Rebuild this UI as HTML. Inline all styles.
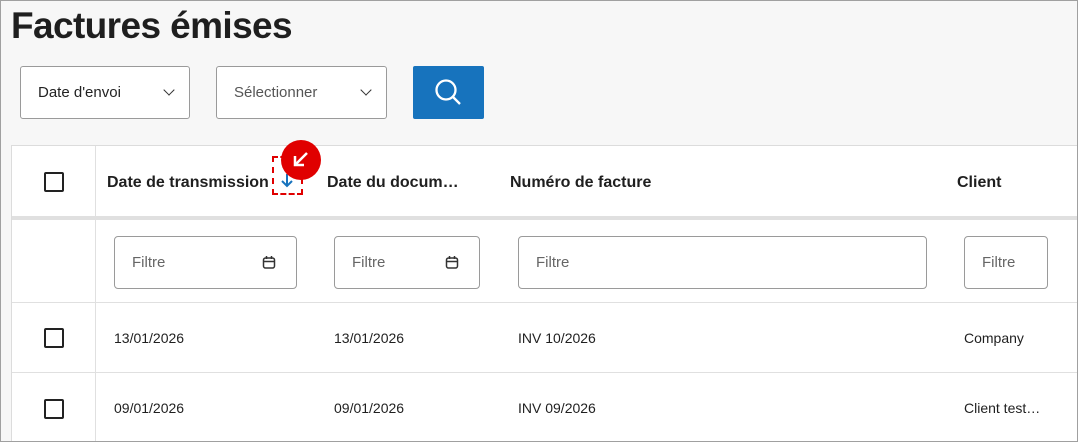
<!DOCTYPE html>
<html><head><style>
*{box-sizing:border-box;margin:0;padding:0}
html,body{width:1078px;height:442px;overflow:hidden}
body{background:#f7f7f7;font-family:"Liberation Sans",sans-serif;position:relative}
.frame{position:absolute;left:0;top:0;width:1078px;height:442px;border:1px solid #a0a0a0;pointer-events:none;z-index:10}
.a{position:absolute}
h1{position:absolute;left:11px;top:5px;font-size:37px;font-weight:bold;color:#1f1f1f;letter-spacing:-0.6px}
.sel{position:absolute;top:66px;height:53px;background:#fff;border:1px solid #9a9a9a;border-radius:3px;font-size:15px;line-height:51px;padding-left:17px}
.chev{position:absolute;right:16px;top:19px;width:8px;height:8px;border-right:1.6px solid #333;border-bottom:1.6px solid #333;transform:rotate(45deg)}
.tbl{position:absolute;left:11px;top:145px;width:1070px;height:300px;background:#fff;border:1px solid #dcdcdc}
.hl{position:absolute;left:0;right:0;background:#e0e0e0}
.vl{position:absolute;left:83px;width:1px;background:#e0e0e0}
.cb{position:absolute;left:32px;width:20px;height:20px;border:2px solid #222;border-radius:2px}
.th{position:absolute;top:28px;font-size:16px;font-weight:bold;color:#1f1f1f}
.td{position:absolute;font-size:14px;color:#1f1f1f}
.inp{position:absolute;top:90px;height:53px;border:1px solid #9a9a9a;border-radius:4px;font-size:15px;color:#666;line-height:51px;padding-left:17px}
.cal{position:absolute;right:20px;top:18px}
</style></head><body>
<div class="frame"></div>
<h1>Factures émises</h1>
<div class="sel" style="left:20px;width:170px;color:#222">Date d'envoi<div class="chev"></div></div>
<div class="sel" style="left:216px;width:171px;color:#555">Sélectionner<div class="chev"></div></div>
<div class="a" style="left:413px;top:66px;width:71px;height:53px;background:#1773bd;border-radius:2px">
<svg width="71" height="53"><circle cx="33" cy="24" r="9.5" fill="none" stroke="#fff" stroke-width="2.3"/><line x1="40" y1="31" x2="47" y2="38" stroke="#fff" stroke-width="2.3"/></svg></div>
<div class="tbl">
<div class="hl" style="top:70px;height:4px"></div>
<div class="hl" style="top:156px;height:1px"></div>
<div class="hl" style="top:226px;height:1px"></div>
<div class="vl" style="top:0;height:70px"></div>
<div class="vl" style="top:74px;height:230px"></div>
<div class="cb" style="top:26px"></div>
<div class="cb" style="top:182px"></div>
<div class="cb" style="top:253px"></div>
<div class="th" style="left:95px">Date de transmission</div>
<div class="th" style="left:315px">Date du docum…</div>
<div class="th" style="left:498px">Numéro de facture</div>
<div class="th" style="left:945px">Client</div>
<div class="a" style="left:260px;top:10px;width:31px;height:39px;border:2px dashed #e00000"></div>
<svg class="a" style="left:268px;top:26px" width="14" height="18"><path d="M7 2v12M2 9l5 5 5-5" fill="none" stroke="#1773bd" stroke-width="2"/></svg>
<div class="a" style="left:269px;top:-6px;width:40px;height:40px;border-radius:50%;background:#e00000"></div>
<svg class="a" style="left:278px;top:3px" width="22" height="22"><path d="M17 4L5 16M5 7v9h9" fill="none" stroke="#fff" stroke-width="2.5"/></svg>
<div class="inp" style="left:102px;width:183px">Filtre<svg class="cal" width="14" height="14"><rect x="1.5" y="3" width="11" height="10" rx="2" fill="none" stroke="#333" stroke-width="1.5"/><line x1="1.5" y1="6.5" x2="12.5" y2="6.5" stroke="#333" stroke-width="1.5"/><line x1="4.5" y1="1" x2="4.5" y2="4" stroke="#333" stroke-width="1.5"/><line x1="9.5" y1="1" x2="9.5" y2="4" stroke="#333" stroke-width="1.5"/></svg></div>
<div class="inp" style="left:322px;width:146px">Filtre<svg class="cal" width="14" height="14"><rect x="1.5" y="3" width="11" height="10" rx="2" fill="none" stroke="#333" stroke-width="1.5"/><line x1="1.5" y1="6.5" x2="12.5" y2="6.5" stroke="#333" stroke-width="1.5"/><line x1="4.5" y1="1" x2="4.5" y2="4" stroke="#333" stroke-width="1.5"/><line x1="9.5" y1="1" x2="9.5" y2="4" stroke="#333" stroke-width="1.5"/></svg></div>
<div class="inp" style="left:506px;width:409px">Filtre</div>
<div class="inp" style="left:952px;width:84px">Filtre</div>
<div class="td" style="left:102px;top:184px">13/01/2026</div>
<div class="td" style="left:322px;top:184px">13/01/2026</div>
<div class="td" style="left:506px;top:184px">INV 10/2026</div>
<div class="td" style="left:952px;top:184px">Company</div>
<div class="td" style="left:102px;top:254px">09/01/2026</div>
<div class="td" style="left:322px;top:254px">09/01/2026</div>
<div class="td" style="left:506px;top:254px">INV 09/2026</div>
<div class="td" style="left:952px;top:254px">Client test…</div>
</div>
</body></html>
